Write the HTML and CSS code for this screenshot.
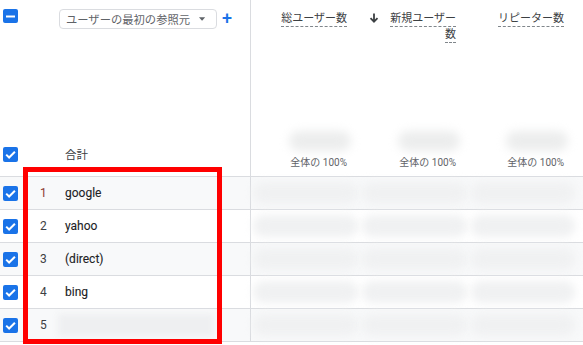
FILE: index.html
```html
<!DOCTYPE html>
<html lang="ja">

<head>
    <meta charset="UTF-8">
    <meta name="viewport" content="width=device-width, initial-scale=1.0">
    <title>参照元レポート</title>
    <link rel="stylesheet" href="styles.css">
</head>

<body>
    <main class="report">
        <!-- ====> header: dimension picker, metric titles and totals -->
        <div class="row head">
            <div class="lead">
                <div class="lead-top">
                    <span class="box"><svg viewBox="0 0 15 15"><path d="M3 7.5h9" /></svg></span>
                    <div class="picker">
                        <span>ユーザーの最初の参照元</span>
                        <svg class="caret" viewBox="0 0 8 4"><path d="M0 0h7L3.5 4z" /></svg>
                    </div>
                    <span class="plus">+</span>
                </div>
                <div class="lead-bottom">
                    <span class="box"><svg viewBox="0 0 15 15"><path d="M3.2 7.6l2.9 2.9 5.8-5.8" /></svg></span>
                    <span class="total">合計</span>
                </div>
            </div>
            <div class="cell">
                <div class="title"><span class="label">総ユーザー数</span></div>
                <div class="sum"></div>
                <div class="share">全体の 100%</div>
            </div>
            <div class="cell">
                <div class="title">
                    <svg class="arrow" viewBox="0 0 10 10"><path d="M5 0.5v8M1.5 5.2L5 8.7l3.5-3.5" /></svg>
                    <span class="label narrow">新規ユーザー数</span>
                </div>
                <div class="sum"></div>
                <div class="share">全体の 100%</div>
            </div>
            <div class="cell last">
                <div class="title"><span class="label">リピーター数</span></div>
                <div class="sum"></div>
                <div class="share">全体の 100%</div>
            </div>
        </div>

        <!-- ====> data rows -->
        <div class="row shade">
            <div class="lead">
                <span class="box"><svg viewBox="0 0 15 15"><path d="M3.2 7.6l2.9 2.9 5.8-5.8" /></svg></span>
                <span class="num first">1</span>
                <span class="name">google</span>
            </div>
            <div class="cell"><div class="blur"></div></div>
            <div class="cell"><div class="blur"></div></div>
            <div class="cell last"><div class="blur"></div></div>
        </div>
        <div class="row">
            <div class="lead">
                <span class="box"><svg viewBox="0 0 15 15"><path d="M3.2 7.6l2.9 2.9 5.8-5.8" /></svg></span>
                <span class="num">2</span>
                <span class="name">yahoo</span>
            </div>
            <div class="cell"><div class="blur"></div></div>
            <div class="cell"><div class="blur"></div></div>
            <div class="cell last"><div class="blur"></div></div>
        </div>
        <div class="row shade">
            <div class="lead">
                <span class="box"><svg viewBox="0 0 15 15"><path d="M3.2 7.6l2.9 2.9 5.8-5.8" /></svg></span>
                <span class="num">3</span>
                <span class="name">(direct)</span>
            </div>
            <div class="cell"><div class="blur"></div></div>
            <div class="cell"><div class="blur"></div></div>
            <div class="cell last"><div class="blur"></div></div>
        </div>
        <div class="row">
            <div class="lead">
                <span class="box"><svg viewBox="0 0 15 15"><path d="M3.2 7.6l2.9 2.9 5.8-5.8" /></svg></span>
                <span class="num">4</span>
                <span class="name">bing</span>
            </div>
            <div class="cell"><div class="blur"></div></div>
            <div class="cell"><div class="blur"></div></div>
            <div class="cell last"><div class="blur"></div></div>
        </div>
        <div class="row shade">
            <div class="lead">
                <span class="box"><svg viewBox="0 0 15 15"><path d="M3.2 7.6l2.9 2.9 5.8-5.8" /></svg></span>
                <span class="num">5</span>
                <span class="name-blur"></span>
            </div>
            <div class="cell"><div class="blur"></div></div>
            <div class="cell"><div class="blur"></div></div>
            <div class="cell last"><div class="blur"></div></div>
        </div>

        <!-- ====> red annotation frame over the source names -->
        <div class="mark"></div>
    </main>
</body>

</html>
```

FILE: styles.css
```css
* {
    padding: 0;
    margin: 0;
    box-sizing: border-box;
}

html,
body {
    width: 100%;
    height: 100%;
    overflow: hidden;
    background: #fff;
}

body {
    font-family: Roboto, "Noto Sans CJK JP", sans-serif;
    color: #202124;
}

.report {
    position: relative;
    width: 583px;
}

.row {
    display: flex;
    height: 33px;
    border-bottom: 1px solid #dadce0;
}

.row.shade {
    background: #f8f9fa;
}

.row.head {
    height: 177px;
}

.lead {
    width: 251px;
    flex: none;
    display: flex;
    align-items: center;
    padding-left: 3px;
    border-right: 1px solid #dadce0;
}

.head .lead {
    flex-direction: column;
    align-items: stretch;
    justify-content: space-between;
    padding-top: 9px;
    padding-bottom: 14px;
}

.lead-top,
.lead-bottom {
    display: flex;
    align-items: center;
}

.lead-top {
    align-items: flex-start;
}

.box {
    width: 15px;
    height: 15px;
    flex: none;
    border-radius: 2px;
    background: #1a73e8;
    display: flex;
}

.box svg {
    width: 15px;
    height: 15px;
    fill: none;
    stroke: #fff;
    stroke-width: 2;
}

.lead-top .box {
    height: 14px;
}

.picker {
    margin-left: 41px;
    width: 158px;
    height: 20px;
    border: 1px solid #dadce0;
    border-radius: 4px;
    display: flex;
    align-items: center;
    justify-content: space-between;
    padding: 0 10px 0 6px;
    font-size: 11.3px;
    color: #5f6368;
}

.caret {
    width: 7px;
    height: 4px;
    fill: #5f6368;
}

.plus {
    margin-left: 5px;
    color: #1a73e8;
    font-size: 18px;
    font-weight: 500;
    line-height: 18px;
}

.total {
    margin-left: 47px;
    font-size: 11.5px;
    color: #3c4043;
}

.cell {
    width: 109px;
    flex: none;
    display: flex;
    align-items: center;
    padding: 0 2px;
}

.cell.last {
    width: 108px;
}

.head .cell {
    flex-direction: column;
    align-items: flex-end;
    padding: 11px 13px 7px 0;
}

.title {
    display: flex;
    align-items: flex-start;
    font-size: 11px;
    line-height: 15px;
    color: #3c4043;
}

.label {
    text-align: right;
    text-decoration: underline dashed #80868b;
    text-decoration-thickness: 1px;
    text-underline-offset: 4px;
}

.label.narrow {
    width: 68px;
    line-height: 16px;
}

.arrow {
    width: 10px;
    height: 10px;
    margin: 2px 9px 0 0;
    fill: none;
    stroke: #3c4043;
    stroke-width: 1.8;
}

.sum {
    margin-top: auto;
    margin-right: -4px;
    width: 62px;
    height: 20px;
    background: #eceded;
    border-radius: 10px;
    filter: blur(5px);
}

.share {
    margin-top: 6px;
    font-size: 10px;
    line-height: 12px;
    color: #5f6368;
}

.num {
    width: 25px;
    margin-left: 22px;
    font-size: 12px;
    color: #3c4043;
}

.num.first {
    color: #8c3b32;
}

.name {
    font-size: 12px;
    color: #202124;
    -webkit-text-stroke: 0.1px #202124;
}

.name-blur {
    width: 156px;
    height: 22px;
    margin-left: -7px;
    background: #eeeff1;
    filter: blur(3px);
}

.blur {
    width: 100%;
    height: 22px;
    background: #f0f1f2;
    border-radius: 10px;
    filter: blur(4px);
}

.mark {
    position: absolute;
    left: 23px;
    top: 167px;
    width: 199px;
    height: 177px;
    border: 5px solid #f00;
}
```
